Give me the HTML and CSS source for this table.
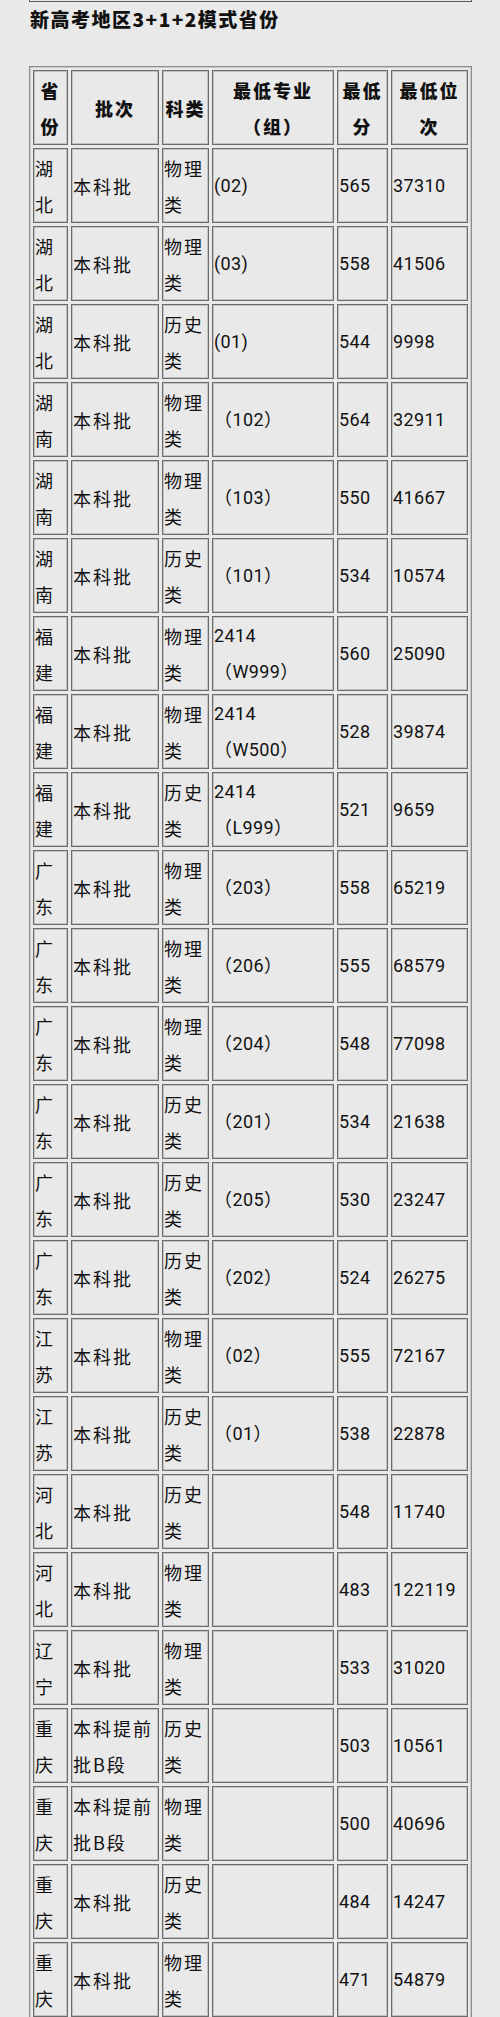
FILE: index.html
```html
<!DOCTYPE html>
<html lang="zh-CN">
<head>
<meta charset="utf-8">
<title>新高考地区3+1+2模式省份</title>
<link rel="stylesheet" href="styles.css">
</head>
<body>
<div class="page">
  <div class="prev-box"></div>
  <h2 class="title">新高考地区3+1+2模式省份</h2>
  <table class="score-table">
    <colgroup>
      <col class="c-prov"><col class="c-batch"><col class="c-type"><col class="c-major"><col class="c-score"><col class="c-rank">
    </colgroup>
    <thead>
      <tr>
        <th class="cjk">省份</th>
        <th class="cjk">批次</th>
        <th class="cjk">科类</th>
        <th class="cjk">最低专业（组）</th>
        <th class="cjk">最低分</th>
        <th class="cjk">最低位次</th>
      </tr>
    </thead>
    <tbody>
      <tr><td class="cjk">湖北</td><td class="cjk">本科批</td><td class="cjk">物理类</td><td>(02)</td><td>565</td><td>37310</td></tr>
      <tr><td class="cjk">湖北</td><td class="cjk">本科批</td><td class="cjk">物理类</td><td>(03)</td><td>558</td><td>41506</td></tr>
      <tr><td class="cjk">湖北</td><td class="cjk">本科批</td><td class="cjk">历史类</td><td>(01)</td><td>544</td><td>9998</td></tr>
      <tr><td class="cjk">湖南</td><td class="cjk">本科批</td><td class="cjk">物理类</td><td>（102）</td><td>564</td><td>32911</td></tr>
      <tr><td class="cjk">湖南</td><td class="cjk">本科批</td><td class="cjk">物理类</td><td>（103）</td><td>550</td><td>41667</td></tr>
      <tr><td class="cjk">湖南</td><td class="cjk">本科批</td><td class="cjk">历史类</td><td>（101）</td><td>534</td><td>10574</td></tr>
      <tr><td class="cjk">福建</td><td class="cjk">本科批</td><td class="cjk">物理类</td><td>2414<br>（W999）</td><td>560</td><td>25090</td></tr>
      <tr><td class="cjk">福建</td><td class="cjk">本科批</td><td class="cjk">物理类</td><td>2414<br>（W500）</td><td>528</td><td>39874</td></tr>
      <tr><td class="cjk">福建</td><td class="cjk">本科批</td><td class="cjk">历史类</td><td>2414<br>（L999）</td><td>521</td><td>9659</td></tr>
      <tr><td class="cjk">广东</td><td class="cjk">本科批</td><td class="cjk">物理类</td><td>（203）</td><td>558</td><td>65219</td></tr>
      <tr><td class="cjk">广东</td><td class="cjk">本科批</td><td class="cjk">物理类</td><td>（206）</td><td>555</td><td>68579</td></tr>
      <tr><td class="cjk">广东</td><td class="cjk">本科批</td><td class="cjk">物理类</td><td>（204）</td><td>548</td><td>77098</td></tr>
      <tr><td class="cjk">广东</td><td class="cjk">本科批</td><td class="cjk">历史类</td><td>（201）</td><td>534</td><td>21638</td></tr>
      <tr><td class="cjk">广东</td><td class="cjk">本科批</td><td class="cjk">历史类</td><td>（205）</td><td>530</td><td>23247</td></tr>
      <tr><td class="cjk">广东</td><td class="cjk">本科批</td><td class="cjk">历史类</td><td>（202）</td><td>524</td><td>26275</td></tr>
      <tr><td class="cjk">江苏</td><td class="cjk">本科批</td><td class="cjk">物理类</td><td>（02）</td><td>555</td><td>72167</td></tr>
      <tr><td class="cjk">江苏</td><td class="cjk">本科批</td><td class="cjk">历史类</td><td>（01）</td><td>538</td><td>22878</td></tr>
      <tr><td class="cjk">河北</td><td class="cjk">本科批</td><td class="cjk">历史类</td><td></td><td>548</td><td>11740</td></tr>
      <tr><td class="cjk">河北</td><td class="cjk">本科批</td><td class="cjk">物理类</td><td></td><td>483</td><td>122119</td></tr>
      <tr><td class="cjk">辽宁</td><td class="cjk">本科批</td><td class="cjk">物理类</td><td></td><td>533</td><td>31020</td></tr>
      <tr><td class="cjk">重庆</td><td class="cjk">本科提前批B段</td><td class="cjk">历史类</td><td></td><td>503</td><td>10561</td></tr>
      <tr><td class="cjk">重庆</td><td class="cjk">本科提前批B段</td><td class="cjk">物理类</td><td></td><td>500</td><td>40696</td></tr>
      <tr><td class="cjk">重庆</td><td class="cjk">本科批</td><td class="cjk">历史类</td><td></td><td>484</td><td>14247</td></tr>
      <tr><td class="cjk">重庆</td><td class="cjk">本科批</td><td class="cjk">物理类</td><td></td><td>471</td><td>54879</td></tr>
    </tbody>
  </table>
</div>
</body>
</html>
```
FILE: styles.css
```css
html, body {
  margin: 0;
  padding: 0;
  background: #e9e9e9;
  color: #111;
  font-family: Roboto, "Noto Sans CJK SC", sans-serif;
}

.page {
  padding: 0 28px 0 29px;
}

.prev-box {
  height: 1px;
  border: 1px solid #5a5a5a;
  border-top: none;
}

.title {
  margin: 5px 0 35px 1px;
  font-size: 19px;
  line-height: 24px;
  font-weight: 900;
  letter-spacing: 1.5px;
  font-family: "Noto Sans CJK SC", sans-serif;
}

.score-table {
  width: 443px;
  table-layout: fixed;
  border-collapse: separate;
  border-spacing: 3px;
  border: 1px solid #8e8e8e;
  box-shadow: inset 0 0 0 1px #c8c8c8;
}

.c-prov { width: 35px; }
.c-batch { width: 88px; }
.c-type { width: 47px; }
.c-major { width: 122px; }
.c-score { width: 51px; }
.c-rank { width: 77px; }

.score-table tr {
  height: 75px;
}

.score-table th,
.score-table td {
  box-sizing: border-box;
  padding: 0 1px;
  border: 1px solid #6c6c6c;
  box-shadow: inset 0 0 0 1px #c2c2c2;
  vertical-align: middle;
  line-height: 36px;
  font-size: 18px;
  text-align: left;
  font-weight: 400;
  letter-spacing: 0.4px;
  text-spacing-trim: space-all;
}

.score-table th {
  text-align: center;
  font-weight: 900;
}

.score-table .cjk {
  font-family: "Noto Sans CJK SC", sans-serif;
  letter-spacing: 2px;
}
```
